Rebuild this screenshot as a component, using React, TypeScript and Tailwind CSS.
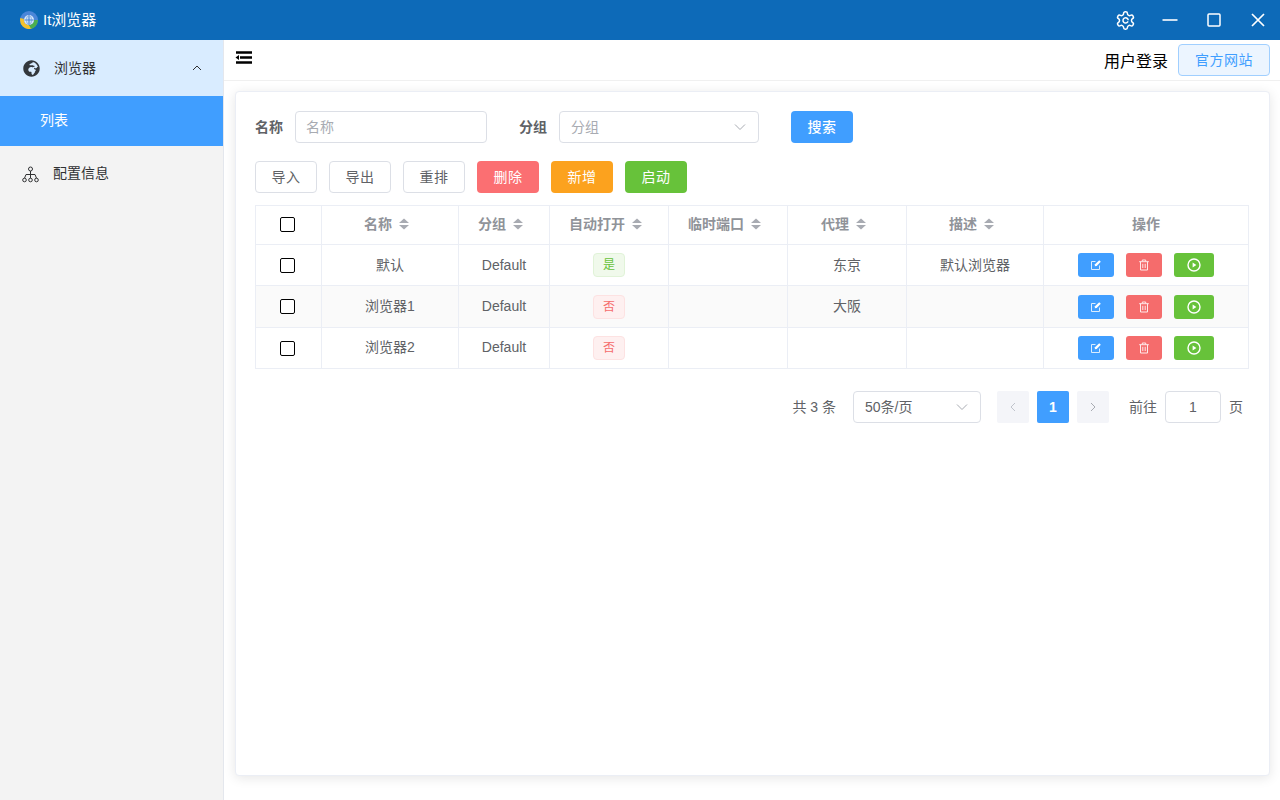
import React from "react";
import { FaGlobeAfrica } from "react-icons/fa";

const font = "font-['Liberation_Sans','Noto_Sans_CJK_SC',sans-serif]";

function Sort() {
  return (
    <svg width="10" height="12" viewBox="0 0 10 12" className="ml-[7px] mr-[7px] shrink-0">
      <path d="M5 0.5 L10 5 H0 Z" fill="#a8abb2" />
      <path d="M5 11.5 L10 7 H0 Z" fill="#a8abb2" />
    </svg>
  );
}

function Check() {
  return <span className="block w-[15px] h-[15px] ml-6 rounded-[2px] border border-black bg-white" />;
}

function Chevron({ size = 12 }: { size?: number }) {
  return (
    <svg width={size} height={size} viewBox="0 0 12 12" fill="none" stroke="#a8abb2" strokeWidth="1">
      <path d="M1 3.5 L6 8.5 L11 3.5" />
    </svg>
  );
}

function Btn({ children, cls }: { children: React.ReactNode; cls: string }) {
  return (
    <button className={`w-[62px] h-8 rounded-[4px] text-sm tracking-[0.5px] flex items-center justify-center ${cls}`}>{children}</button>
  );
}

function Actions() {
  return (
    <div className="flex items-center justify-center gap-3">
      <button className="w-9 h-6 rounded-[3px] bg-[#409eff] flex items-center justify-center">
        <svg width="12" height="12" viewBox="0 0 12 12" fill="none" stroke="#d9ecff" strokeWidth="1">
          <path d="M9.5 6.5 V10.5 H1.5 V2.5 H5.5" />
          <path d="M4.8 7.2 L5 5.3 L9.2 1.2 L10.8 2.8 L6.7 7 Z" fill="#fff" stroke="none" />
        </svg>
      </button>
      <button className="w-9 h-6 rounded-[3px] bg-[#f56c6c] flex items-center justify-center">
        <svg width="12" height="12" viewBox="0 0 12 12" fill="none" stroke="#ffe9e9" strokeWidth="1">
          <path d="M1.2 2.7 H10.8 M4.3 2.5 V1 H7.7 V2.5" />
          <path d="M2.5 2.7 V11 H9.5 V2.7" />
          <path d="M4.8 4.8 V9 M7.2 4.8 V9" />
        </svg>
      </button>
      <button className="w-10 h-6 rounded-[3px] bg-[#67c23a] flex items-center justify-center">
        <svg width="14" height="14" viewBox="0 0 14 14" fill="none">
          <circle cx="7" cy="7" r="6" stroke="#fff" strokeWidth="1.4" />
          <path d="M5.6 4.6 L9.4 7 L5.6 9.4 Z" fill="#fff" />
        </svg>
      </button>
    </div>
  );
}

function Tag({ yes }: { yes: boolean }) {
  return (
    <span
      className={`inline-flex w-8 h-6 items-center justify-center rounded-[4px] border text-xs align-middle ${
        yes ? "bg-[#f0f9eb] border-[#e1f3d8] text-[#67c23a]" : "bg-[#fef0f0] border-[#fde2e2] text-[#f56c6c]"
      }`}
    >
      {yes ? "是" : "否"}
    </span>
  );
}

const heads: [string, boolean][] = [
  ["名称", true],
  ["分组", true],
  ["自动打开", true],
  ["临时端口", true],
  ["代理", true],
  ["描述", true],
  ["操作", false],
];

const rows = [
  { name: "默认", yes: true, proxy: "东京", desc: "默认浏览器", h: "h-[41px]", bg: "", pad: "" },
  { name: "浏览器1", yes: false, proxy: "大阪", desc: "", h: "h-[42px]", bg: "bg-[#fafafa]", pad: "pb-[2px]" },
  { name: "浏览器2", yes: false, proxy: "", desc: "", h: "h-[41px]", bg: "", pad: "pb-[2px]" },
];

export default function App() {
  return (
    <div className={`${font} w-[1280px] h-[800px] flex flex-col overflow-hidden bg-white`}>
      <header className="h-10 shrink-0 bg-[#0d6ab8] flex items-center text-white">
        <div className="flex items-center pl-5 gap-[5px] flex-1">
          <svg width="18" height="18" viewBox="0 0 18 18">
            <circle cx="9" cy="9" r="9" fill="#4a86d8" />
            <path d="M0.3 7 A9 9 0 0 0 12 17.5 L9 14 A5 5 0 0 1 4 8 Z" fill="#f2c12e" />
            <path d="M11 17.8 A9 9 0 0 0 18 9 L14 9 A5 5 0 0 1 9 14 Z" fill="#4caf50" />
            <circle cx="9" cy="9" r="5" fill="#d6e7fb" />
            <path d="M9 4.5 V13.5 M4.5 9 H13.5" stroke="#3f7fd0" strokeWidth="1.1" />
            <ellipse cx="9" cy="9" rx="2.4" ry="4.4" fill="none" stroke="#6f9fdc" strokeWidth="0.8" />
          </svg>
          <span className="text-[15px]">It浏览器</span>
        </div>
        <div className="flex items-center">
          <svg width="21" height="21" viewBox="0 0 24 24" fill="none" stroke="#fff" strokeWidth="1.7" strokeLinecap="round" strokeLinejoin="round" className="mr-[26px]">
            <path d="M12.22 2h-.44a2 2 0 0 0-2 2v.18a2 2 0 0 1-1 1.73l-.43.25a2 2 0 0 1-2 0l-.15-.08a2 2 0 0 0-2.73.73l-.22.38a2 2 0 0 0 .73 2.73l.15.1a2 2 0 0 1 1 1.72v.51a2 2 0 0 1-1 1.74l-.15.09a2 2 0 0 0-.73 2.73l.22.38a2 2 0 0 0 2.73.73l.15-.08a2 2 0 0 1 2 0l.43.25a2 2 0 0 1 1 1.73V20a2 2 0 0 0 2 2h.44a2 2 0 0 0 2-2v-.18a2 2 0 0 1 1-1.73l.43-.25a2 2 0 0 1 2 0l.15.08a2 2 0 0 0 2.73-.73l.22-.39a2 2 0 0 0-.73-2.73l-.15-.08a2 2 0 0 1-1-1.74v-.5a2 2 0 0 1 1-1.74l.15-.09a2 2 0 0 0 .73-2.73l-.22-.38a2 2 0 0 0-2.73-.73l-.15.08a2 2 0 0 1-2 0l-.43-.25a2 2 0 0 1-1-1.73V4a2 2 0 0 0-2-2z" />
            <path d="M14.6 13.6 A3 3 0 1 1 15 11" />
          </svg>
          <svg width="16" height="16" viewBox="0 0 16 16" className="mr-[29px]">
            <path d="M0.5 8 H15.5" stroke="#fff" strokeWidth="1.6" />
          </svg>
          <svg width="14" height="14" viewBox="0 0 14 14" fill="none" className="mr-[30px]">
            <rect x="1" y="1" width="12" height="12" rx="1" stroke="#fff" strokeWidth="1.5" />
          </svg>
          <svg width="14" height="14" viewBox="0 0 14 14" className="mr-[15px]">
            <path d="M1 1 L13 13 M13 1 L1 13" stroke="#fff" strokeWidth="1.7" />
          </svg>
        </div>
      </header>
      <div className="flex flex-1 min-h-0">
        <aside className="w-[224px] shrink-0 bg-[#f3f3f3] border-r border-[#e4e7ed]">
          <div className="h-14 bg-[#d9ecff] flex items-center pl-[23px] pr-[20px] text-sm text-[#303133]">
            <FaGlobeAfrica size={17} color="#33373c" className="mr-[14px]" />
            <span className="flex-1">浏览器</span>
            <svg width="12" height="12" viewBox="0 0 12 12" fill="none" stroke="#303133" strokeWidth="1">
              <path d="M2 8 L6 4 L10 8" />
            </svg>
          </div>
          <div className="h-[50px] bg-[#409eff] flex items-center pl-10 pb-[2px] text-sm text-white">列表</div>
          <div className="h-14 flex items-center pl-[22px] text-sm text-[#303133]">
            <svg width="17" height="17" viewBox="0 0 17 17" fill="none" stroke="#303133" strokeWidth="1" className="mr-[14px]">
              <circle cx="8.5" cy="3" r="2" />
              <circle cx="2.5" cy="14" r="1.8" />
              <circle cx="8.5" cy="14" r="1.8" />
              <circle cx="14.5" cy="14" r="1.8" />
              <path d="M8.5 5 V12.2 M8.5 8.5 H4 L2.5 12.2 M8.5 8.5 H13 L14.5 12.2" />
            </svg>
            <span className="pb-[2px]">配置信息</span>
          </div>
        </aside>
        <div className="flex-1 min-w-0 flex flex-col bg-white">
          <div className="h-[41px] shrink-0 bg-white border-b border-[#f0f0f0] flex items-start justify-between pl-[11px] pr-[10px]">
            <svg width="17" height="14" viewBox="0 0 17 14" className="mt-[11px]">
              <path d="M1 1.5 H17 M5 6.5 H17 M1 11.5 H17" stroke="#000" strokeWidth="2.4" />
              <path d="M0.5 6.5 L4 4 V9 Z" fill="#000" />
            </svg>
            <div className="flex items-center h-10 gap-[10px]">
              <span className="text-base text-black mt-[3px]">用户登录</span>
              <button className="w-[92px] h-8 rounded-[4px] border border-[#a0cfff] bg-[#ecf5ff] text-[#409eff] text-sm tracking-[0.5px]">
                官方网站
              </button>
            </div>
          </div>
          <div className="flex-1 min-h-0 pt-[10px] pl-[11px] pr-[10px] pb-6">
            <main className="h-full bg-white rounded-[4px] border border-[#ebeef5] shadow-[0_2px_12px_0_rgba(0,0,0,0.1)] pt-[19px] pl-[19px] pr-5 text-[#606266] text-sm">
              <div className="flex items-center h-8">
                <label className="font-bold w-10">名称</label>
                <div className="w-[192px] h-8 rounded-[4px] border border-[#dcdfe6] flex items-center px-[10px] text-[#a8abb2]">
                  名称
                </div>
                <label className="font-bold ml-8 w-10">分组</label>
                <div className="w-[200px] h-8 rounded-[4px] border border-[#dcdfe6] flex items-center justify-between pl-[11px] pr-[12px] text-[#a8abb2]">
                  分组
                  <Chevron />
                </div>
                <button className="ml-8 w-[62px] h-8 rounded-[4px] bg-[#409eff] text-white font-medium tracking-[0.5px]">
                  搜索
                </button>
              </div>
              <div className="flex gap-3 mt-[18px]">
                <Btn cls="border border-[#dcdfe6] bg-white text-[#606266]">导入</Btn>
                <Btn cls="border border-[#dcdfe6] bg-white text-[#606266]">导出</Btn>
                <Btn cls="border border-[#dcdfe6] bg-white text-[#606266]">重排</Btn>
                <Btn cls="bg-[#fb6f72] text-white">删除</Btn>
                <Btn cls="bg-[#fca21e] text-white">新增</Btn>
                <Btn cls="bg-[#67c23a] text-white">启动</Btn>
              </div>
              <table className="table-fixed border-collapse w-[993px] mt-3">
                <colgroup>
                  <col className="w-[66px]" />
                  <col className="w-[137px]" />
                  <col className="w-[91px]" />
                  <col className="w-[119px]" />
                  <col className="w-[119px]" />
                  <col className="w-[119px]" />
                  <col className="w-[137px]" />
                  <col className="w-[205px]" />
                </colgroup>
                <thead>
                  <tr className="h-[39px]">
                    <th className="border border-[#ebeef5] p-0 pb-[2px]">
                      <Check />
                    </th>
                    {heads.map(([t, s]) => (
                      <th key={t} className="border border-[#ebeef5] p-0 pb-[2px] font-bold text-[#909399]">
                        <span className="flex items-center justify-center">
                          {t}
                          {s && <Sort />}
                        </span>
                      </th>
                    ))}
                  </tr>
                </thead>
                <tbody>
                  {rows.map((r) => (
                    <tr key={r.name} className={`${r.h} ${r.bg}`}>
                      <td className="border border-[#ebeef5] p-0">
                        <Check />
                      </td>
                      <td className={`border border-[#ebeef5] p-0 text-center ${r.pad}`}>{r.name}</td>
                      <td className={`border border-[#ebeef5] p-0 text-center ${r.pad}`}>Default</td>
                      <td className="border border-[#ebeef5] p-0 text-center">
                        <Tag yes={r.yes} />
                      </td>
                      <td className="border border-[#ebeef5] p-0" />
                      <td className={`border border-[#ebeef5] p-0 text-center ${r.pad}`}>{r.proxy}</td>
                      <td className={`border border-[#ebeef5] p-0 text-center ${r.pad}`}>{r.desc}</td>
                      <td className="border border-[#ebeef5] p-0">
                        <Actions />
                      </td>
                    </tr>
                  ))}
                </tbody>
              </table>
              <div className="flex items-center justify-end h-8 mt-[22px] pr-[6px]">
                <span>共 3 条</span>
                <div className="ml-[17px] w-[128px] h-8 rounded-[4px] border border-[#dcdfe6] flex items-center justify-between pl-[11px] pr-3">
                  50条/页
                  <Chevron />
                </div>
                <span className="ml-4 w-8 h-8 rounded-[2px] bg-[#f4f5f9] flex items-center justify-center">
                  <svg width="10" height="10" viewBox="0 0 10 10" fill="none" stroke="#c0c4cc"><path d="M7 1 L3 5 L7 9" /></svg>
                </span>
                <span className="ml-2 w-8 h-8 rounded-[2px] bg-[#409eff] text-white font-bold flex items-center justify-center">1</span>
                <span className="ml-2 w-8 h-8 rounded-[2px] bg-[#f4f5f9] flex items-center justify-center">
                  <svg width="10" height="10" viewBox="0 0 10 10" fill="none" stroke="#a8abb2"><path d="M3 1 L7 5 L3 9" /></svg>
                </span>
                <span className="ml-5">前往</span>
                <span className="ml-[8px] w-14 h-8 rounded-[4px] border border-[#dcdfe6] flex items-center justify-center">1</span>
                <span className="ml-2">页</span>
              </div>
            </main>
          </div>
        </div>
      </div>
    </div>
  );
}
